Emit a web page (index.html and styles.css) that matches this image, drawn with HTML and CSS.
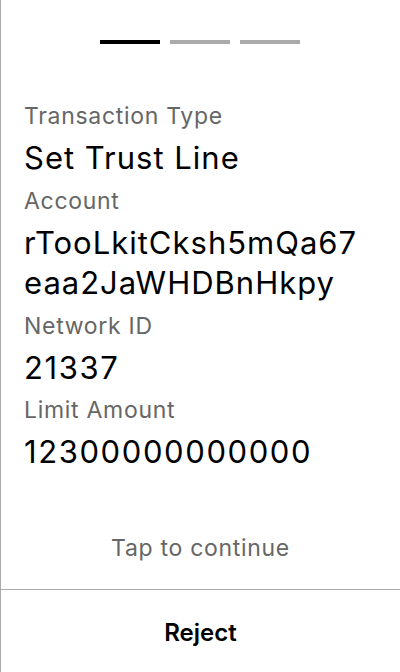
FILE: index.html
```html
<!DOCTYPE html>
<html>
<head>
<meta charset="utf-8">
<link rel="stylesheet" href="styles.css">
</head>
<body>
<div class="screen">
  <div class="steps">
    <span class="step active"></span>
    <span class="step"></span>
    <span class="step"></span>
  </div>
  <div class="fields">
    <div class="label">Transaction Type</div>
    <div class="value">Set Trust Line</div>
    <div class="label">Account</div>
    <div class="value">rTooLkitCksh5mQa67<br>eaa2JaWHDBnHkpy</div>
    <div class="label">Network ID</div>
    <div class="value num">21337</div>
    <div class="label">Limit Amount</div>
    <div class="value num">12300000000000</div>
  </div>
  <div class="tap">Tap to continue</div>
  <div class="footer">
    <div class="reject">Reject</div>
  </div>
</div>
</body>
</html>
```
FILE: styles.css
```css
html, body {
  margin: 0;
  padding: 0;
  background: #fff;
}
body {
  font-family: Inter, "Noto Sans", sans-serif;
}
.screen {
  height: 672px;
  box-sizing: border-box;
  border-left: 1px solid #aaaaaa;
  display: flex;
  flex-direction: column;
}
.steps {
  display: flex;
  justify-content: center;
  gap: 10px;
  padding-top: 40px;
  padding-right: 1px;
}
.step {
  width: 60px;
  height: 4px;
  background: #aaaaaa;
}
.step.active {
  background: #000;
}
.fields {
  padding: 50px 23px 0 23px;
}
.label {
  font-size: 23px;
  line-height: 44px;
  letter-spacing: 0.7px;
  color: #666666;
}
.value {
  font-size: 31px;
  line-height: 40.5px;
  letter-spacing: 1px;
  color: #000;
}
.value.num {
  letter-spacing: 1.6px;
}
.tap {
  margin-top: auto;
  text-align: center;
  font-size: 23px;
  letter-spacing: 0.7px;
  color: #666666;
  line-height: 40px;
  padding-bottom: 21px;
}
.footer {
  border-top: 1px solid #aaaaaa;
  height: 83px;
  box-sizing: border-box;
  padding-top: 2px;
  display: flex;
  align-items: center;
  justify-content: center;
}
.reject {
  font-size: 24px;
  font-weight: 600;
  color: #000;
}
```
